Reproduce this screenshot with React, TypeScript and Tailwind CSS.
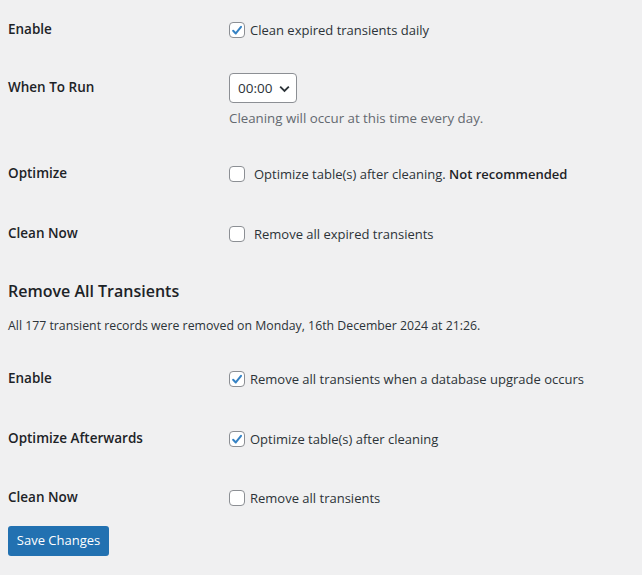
import { ReactNode } from 'react';

function Checkbox({ checked }: { checked?: boolean }) {
  return (
    <span className="inline-flex items-center justify-center w-4 h-4 shrink-0 rounded-[4px] border border-[#8c8f94] bg-white">
      {checked && (
        <svg viewBox="0 0 16 16" className="w-[15px] h-[15px]">
          <path d="M3.6 8.3 L6.6 11.4 L12.6 3.8" fill="none" stroke="#3582c4" strokeWidth="2.3" strokeLinecap="round" strokeLinejoin="round" />
        </svg>
      )}
    </span>
  );
}

interface RowProps {
  label: string;
  height: string;
  children: ReactNode;
}

function Row({ label, height, children }: RowProps) {
  return (
    <div className={`flex ${height}`}>
      <div className="w-[210px] shrink-0 pt-[20px] text-[13.5px] leading-[18px] font-semibold text-[#1d2327]">{label}</div>
      <div className="pl-[11px] pt-[22px]">{children}</div>
    </div>
  );
}

function CheckLine({ checked, gap, children }: { checked?: boolean; gap: string; children: ReactNode }) {
  return (
    <label className={`flex items-center ${gap} text-[13px] leading-[16px] text-[#2c3338]`}>
      <Checkbox checked={checked} />
      <span>{children}</span>
    </label>
  );
}

export default function App() {
  return (
    <div className="min-h-[575px] bg-[#f0f0f1] pl-2 text-[#1d2327]" style={{ fontFamily: '"Open Sans", "Noto Sans", sans-serif' }}>
      {/* Expired transients */}
      <Row label="Enable" height="h-[58px]">
        <CheckLine checked gap="gap-[5px]">Clean expired transients daily</CheckLine>
      </Row>

      <div className="flex h-[86px]">
        <div className="w-[210px] shrink-0 pt-[20px] text-[13.5px] leading-[18px] font-semibold">When To Run</div>
        <div className="pl-[11px] pt-[15px]">
          <div className="flex items-center h-[30px] w-[68px] rounded-[4px] border border-[#8c8f94] bg-white pl-2 text-[13.5px] text-[#2c3338]">
            <span>00:00</span>
            <svg viewBox="0 0 12 12" className="ml-[6px] w-[13px] h-[13px]">
              <path d="M2 4.2 L6 8.2 L10 4.2" fill="none" stroke="#2c3338" strokeWidth="1.7" />
            </svg>
          </div>
          <p className="mt-[6px] text-[13.3px] leading-[18px] text-[#646970]">Cleaning will occur at this time every day.</p>
        </div>
      </div>

      <Row label="Optimize" height="h-[60px]">
        <CheckLine gap="gap-[9px]">
          Optimize table(s) after cleaning. <strong className="font-semibold text-[#1d2327]">Not recommended</strong>
        </CheckLine>
      </Row>

      <Row label="Clean Now" height="h-[58px]">
        <CheckLine gap="gap-[9px]">Remove all expired transients</CheckLine>
      </Row>

      {/* Remove all */}
      <h2 className="mt-[18px] text-[16px] leading-[22px] font-semibold">Remove All Transients</h2>
      <p className="mt-[15px] text-[12.3px] leading-[18px] text-[#2c3338]">
        All 177 transient records were removed on Monday, 16th December 2024 at 21:26.
      </p>

      <div className="mt-[14px]">
        <Row label="Enable" height="h-[60px]">
          <CheckLine checked gap="gap-[5px]">Remove all transients when a database upgrade occurs</CheckLine>
        </Row>
        <Row label="Optimize Afterwards" height="h-[59px]">
          <CheckLine checked gap="gap-[5px]">Optimize table(s) after cleaning</CheckLine>
        </Row>
        <Row label="Clean Now" height="h-[58px]">
          <CheckLine gap="gap-[5px]">Remove all transients</CheckLine>
        </Row>
      </div>

      <button className="h-[30px] w-[101px] rounded-[3px] bg-[#2271b1] text-[13px] text-white">Save Changes</button>
    </div>
  );
}
